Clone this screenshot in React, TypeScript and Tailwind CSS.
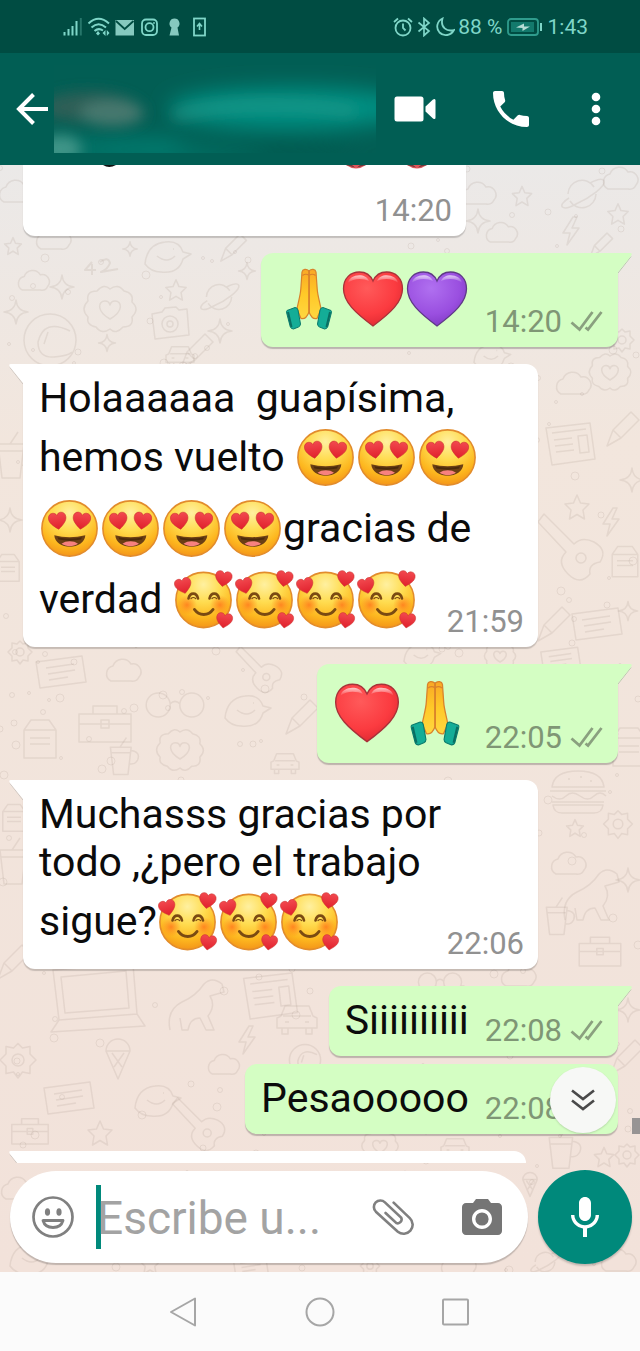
import React from "react";

const HEART =
  "M50 90C20 68 0 50 0 28C0 10 12 0 27 0C38 0 46 6 50 15C54 6 62 0 73 0C88 0 100 10 100 28C100 50 80 68 50 90Z";

/* ---------- emoji ---------- */

function EmojiDefs() {
  return (
    <svg className="absolute h-0 w-0" aria-hidden="true">
      <defs>
        <radialGradient id="face" cx="0.5" cy="0.22" r="0.8">
          <stop offset="0" stopColor="#fff0a0" />
          <stop offset="0.4" stopColor="#ffdc50" />
          <stop offset="0.75" stopColor="#fdb71f" />
          <stop offset="1" stopColor="#f39218" />
        </radialGradient>
        <radialGradient id="cheek">
          <stop offset="0" stopColor="#ff7a1c" stopOpacity="0.85" />
          <stop offset="1" stopColor="#ff8a1c" stopOpacity="0" />
        </radialGradient>
        <linearGradient id="smallHeart" x1="0" y1="0" x2="0" y2="1">
          <stop offset="0" stopColor="#f2494f" />
          <stop offset="1" stopColor="#e0202c" />
        </linearGradient>
        <radialGradient id="redHeart" cx="0.4" cy="0.3" r="0.8">
          <stop offset="0" stopColor="#ff5a5a" />
          <stop offset="0.6" stopColor="#fb3b40" />
          <stop offset="1" stopColor="#d9252e" />
        </radialGradient>
        <radialGradient id="purpleHeart" cx="0.4" cy="0.3" r="0.8">
          <stop offset="0" stopColor="#b070f0" />
          <stop offset="0.6" stopColor="#9a4fe0" />
          <stop offset="1" stopColor="#7a35bd" />
        </radialGradient>
        <linearGradient id="shine" x1="0" y1="0" x2="0" y2="1">
          <stop offset="0" stopColor="#ffffff" stopOpacity="0.7" />
          <stop offset="1" stopColor="#ffffff" stopOpacity="0" />
        </linearGradient>
        <linearGradient id="skin" x1="0" y1="0" x2="0" y2="1">
          <stop offset="0" stopColor="#f9a825" />
          <stop offset="0.5" stopColor="#ffc928" />
          <stop offset="1" stopColor="#ffd740" />
        </linearGradient>
      </defs>
    </svg>
  );
}

function HeartEyes() {
  return (
    <svg viewBox="0 0 61 61" className="size-[61px] shrink-0" role="img" aria-label="😍">
      <circle cx="30.5" cy="30.5" r="27.6" fill="url(#face)" stroke="#e28c2c" strokeWidth="1.6" />
      <g fill="url(#smallHeart)" stroke="#c9302c" strokeWidth="3">
        <path d={HEART} transform="translate(8.8 16) rotate(-8) scale(.175 .185)" />
        <path d={HEART} transform="translate(35 13.5) rotate(8) scale(.175 .185)" />
      </g>
      <path d="M15.300 37.300C25 39.800 36 39.800 46.300 37.300C46 44.500 38.500 48.800 30.800 48.800C23 48.800 15.600 44.500 15.300 37.300Z" fill="#6b3f14" />
      <path d="M18.500 39.200C26 41 36 41 43 39.200L42 41.600C35 43 27 43 19.500 41.600Z" fill="#4a2a0c" />
      <path d="M22.500 45.800C27 42.500 34.500 42.500 39 45.800C34 48.900 27.500 48.900 22.500 45.800Z" fill="#f7817f" />
    </svg>
  );
}

function SmilingHearts() {
  return (
    <svg viewBox="0 0 61 61" className="size-[61px] shrink-0" role="img" aria-label="🥰">
      <circle cx="30.500" cy="31" r="27.600" fill="url(#face)" stroke="#e28c2c" strokeWidth="1.600" />
      <circle cx="14" cy="36" r="10" fill="url(#cheek)" />
      <circle cx="47" cy="36" r="10" fill="url(#cheek)" />
      <g fill="none" stroke="#7a4a12" strokeWidth="2.600" strokeLinecap="round">
        <path d="M15.500 29.500C17 23 23.500 23 25 29.500" />
        <path d="M36.500 29.500C38 23 44.500 23 46 29.500" />
        <path d="M18 29.500q2.300-2 4.600 0M39 29.500q2.300-2 4.600 0" strokeWidth="1.200" />
        <path d="M21.500 40.500C26 47 35.500 47 40 40.500" strokeWidth="3" />
      </g>
      <g fill="url(#smallHeart)" stroke="#c9302c" strokeWidth="3">
        <path d={HEART} transform="translate(.5 11.500) rotate(-14) scale(.165 .17)" />
        <path d={HEART} transform="translate(43.500 1) rotate(9) scale(.165 .17)" />
        <path d={HEART} transform="translate(44.500 43) rotate(9) scale(.16 .165)" />
      </g>
    </svg>
  );
}

type Size = "md" | "lg";
const bigSize: Record<Size, string> = { md: "size-16 shrink-0", lg: "size-[68px] shrink-0" };

function Heart({ color, size }: { color: "red" | "purple"; size: Size }) {
  const red = color === "red";
  return (
    <svg viewBox="0 0 64 64" className={bigSize[size]} role="img" aria-label={red ? "❤️" : "💜"}>
      <path
        d={HEART}
        transform="translate(2.500 5) scale(.59 .6)"
        fill={red ? "url(#redHeart)" : "url(#purpleHeart)"}
        stroke={red ? "#a8323a" : "#5f3a86"}
        strokeWidth="2.200"
      />
      <path d="M7 16C8 7 25 5 28 14C22 11 12 11 7 16ZM36 14C39 5 56 7 57 16C52 11 42 11 36 14Z" fill="url(#shine)" />
    </svg>
  );
}

function Hands({ size }: { size: Size }) {
  return (
    <svg viewBox="0 0 64 64" className={bigSize[size]} role="img" aria-label="🙏">
      <g stroke="#d9822b" strokeWidth="1.200" strokeLinejoin="round">
        <path
          d="M32 4C34.500 1.500 38.500 2 39 5L40.200 22C40.500 28 43 36 44 42L40 51.500C36 52.500 33.500 49 32 45Z"
          fill="url(#skin)"
        />
        <path
          d="M32 4C29.500 1.500 25.500 2 25 5L23.800 22C23.500 28 21 36 20 42L24 51.500C28 52.500 30.500 49 32 45Z"
          fill="url(#skin)"
        />
        <path d="M32 4V46M25.500 8.500q3.500-2.500 6.500 0q3.500-2.500 6.500 0" fill="none" />
      </g>
      <path d="M10 43.500L18 40.500Q20.500 40.500 21 43L23.500 57Q23.500 59 21.500 60L16.500 62Q14 62 13.200 59.500L9.700 46Q9.200 44 10 43.500Z" fill="#14ad97" stroke="#0b7a6c" />
      <path d="M54 43.500L46 40.500Q43.500 40.500 43 43L40.500 57Q40.500 59 42.500 60L47.500 62Q50 62 50.800 59.500L54.300 46Q54.800 44 54 43.500Z" fill="#14ad97" stroke="#0b7a6c" />
      <path d="M11 45L14.500 60M53 45L49.500 60" stroke="#0a6e62" strokeWidth="2" fill="none" />
    </svg>
  );
}

/* ---------- wallpaper ---------- */

const doodles: Record<string, string> = {
  star: "M0-12L3.500-4L12-3L6 3L7.500 12L0 7.500L-7.500 12L-6 3L-12-3L-3.500-4Z",
  spark: "M0-12Q1-1 12 0Q1 1 0 12Q-1 1-12 0Q-1-1 0-12Z",
  cloud: "M-14 9A8 8 0 0 1-12-6A10 10 0 0 1 6-8A8 8 0 0 1 14 5Q12 10 6 9Z",
  planet: "M-14 0A14 14 0 0 1 12-7M14 0A14 14 0 0 1-12 7M-13 4C-26 12-20 18-6 10C8 4 24-8 22-13C20-17 12-13 8-11",
  camera: "M-18-10L-8-12L-5-16L6-17L9-14L17-15L19 11L-15 15ZM8 0A8 8 0 1 1-8 0A8 8 0 1 1 8 0M3 0A3 3 0 1 1-3 0A3 3 0 1 1 3 0",
  flower:
    "M-22-8Q-24-18-13-18Q-6-26 0-20Q8-26 14-18Q24-16 22-7Q30 0 22 8Q24 18 13 18Q6 26 0 20Q-8 26-14 18Q-24 16-22 8Q-30 0-22-8ZM0 10C-14 2-12-8-5-8Q-1-8 0-4Q1-8 5-8C12-8 14 2 0 10Z",
  helmet: "M26 0A26 26 0 1 1-26 0A26 26 0 1 1 26 0M20-9Q-6-22-12 2Q-12 18 4 17Q18 16 22 12M-6 4L-2-8",
  burger: "M-26-6Q-24-22 0-22Q24-22 26-6ZM-28-2H28M-26 3Q-18 9-12 3T2 3T16 3T28 3M-26 9H26M-25 12Q-24 20-16 20H16Q24 20 25 12ZM-10-14H-8M2-16H4M12-12H14",
  car: "M-20 6V-4L-16-6L-12-16H12L16-6L20-4V6ZM-15 6V12H-9V6M9 6V12H15V6M-14-6H14M-12 0H-8M8 0H12",
  paper: "M-24-16L20-21L25 15L-18 21ZM-18-11L16-15M-16-4L2-6M-15 2L3 0M-14 8L4 6M8-8L17-9L19 8L10 9Z",
  guitar: "M-34-26L-6 4Q-16 14-4 26Q8 38 18 26Q16 16 28 14Q36 2 22-6Q10-12 2-4L-28-34ZM14 10A5 5 0 1 1 4 10A5 5 0 1 1 14 10",
  pencil: "M-14 14L-8-2L10-20L18-12L0 6ZM-8-2L0 6",
  box: "M-16-12H16V16H-16ZM-16-12L-9-22H9L16-12M-10-4H10M-10 2H10",
  laptop: "M-42-30L38-36L42 14L-36 20ZM-34-23L31-29L34 8L-30 13ZM-36 20L-44 32L50 26L42 14",
  gear: "M0-11L3-8L8-9L8-4L12 0L8 4L8 9L3 8L0 12L-3 8L-8 9L-8 4L-12 0L-8-4L-8-9L-3-8ZM4 0A4 4 0 1 1-4 0A4 4 0 1 1 4 0",
  note: "M-24-10L22-16L26 10L-20 16ZM-14-4L14-8M-12 2L15-2M-11 8L8 5",
  bolt: "M2-14L-8 2H-1L-4 14L8-3H1L6-14Z",
  bird: "M-20 8Q-18-12 0-14Q14-16 18-4L26-2L18 3Q14 18-4 16Q-14 16-20 8ZM-8 0Q2 8 10 0M8-7H9",
  cup: "M-12-16H14L10 18H-8ZM-11-9H13M14-12Q26-10 22 0Q19 6 12 5M0-16L8-28",
  dino: "M-30 20Q-34 0-18-8Q-4-14 4-26Q12-34 22-26L24-18L10-14Q16-4 8 6L14 20H6L0 8Q-10 8-12 20H-18L-20 8",
  bag: "M-26-8H26V20H-26ZM-12-8V-16H12V-8M-26 2H26M-4-2H4V6H-4Z",
  glasses: "M-4 0A10 10 0 1 1-24 0A10 10 0 1 1-4 0M24 0A10 10 0 1 1 4 0A10 10 0 1 1 24 0M-4-1Q0-5 4-1",
  cone: "M-12-4L0 24L12-4ZM-12-4A12 12 0 1 1 12-4M-6-2L4 12M6-2L-4 12",
};

const placed: [string, number, number, number?][] = [
  ["star", 13, 246, 0.7], ["cloud", 18, 193], ["cloud", 35, 282, 0.9], ["spark", 62, 287], ["spark", 16, 312],
  ["flower", 110, 309], ["helmet", 50, 340], ["camera", 170, 324], ["planet", 219, 297, 0.9], ["star", 176, 290, 0.85],
  ["bird", 165, 256], ["spark", 130, 249, 0.6], ["pencil", 195, 354], ["spark", 220, 331], ["spark", 247, 271, 0.7],
  ["spark", 107, 343, 0.7], ["pencil", 232, 250, 0.8], ["cloud", 55, 240],
  ["cloud", 622, 180], ["planet", 582, 194], ["star", 522, 196, 0.8], ["cloud", 480, 195], ["star", 618, 214, 0.85],
  ["bolt", 571, 231], ["cloud", 503, 234, 0.9], ["spark", 478, 221], ["pencil", 600, 247, 0.7], ["gear", 622, 340],
  ["flower", 610, 372, 0.8], ["cloud", 575, 385], ["bird", 490, 356, 0.8], ["car", 180, 358, 0.7],
  ["paper", 570, 444], ["pencil", 621, 432], ["star", 577, 507], ["bolt", 611, 522], ["spark", 632, 480],
  ["guitar", 572, 548], ["box", 625, 564, 0.8], ["note", 596, 624], ["spark", 628, 611, 0.8], ["pencil", 552, 627],
  ["cup", 10, 460], ["spark", 10, 520], ["box", 8, 570, 0.7], ["gear", 20, 652],
  ["note", 60, 672], ["glasses", 175, 705, 1.2], ["bird", 245, 710], ["bag", 105, 722], ["box", 40, 742], ["flower", 180, 750, 0.9],
  ["cup", 120, 760, 0.8], ["guitar", 260, 670, 0.7], ["pencil", 300, 720], ["cloud", 125, 672], ["car", 285, 765, 0.7],
  ["bird", 420, 655, 0.8], ["flower", 500, 656, 0.6], ["note", 560, 660, 0.8], ["burger", 578, 793], ["box", 629, 750],
  ["gear", 618, 824, 1.2], ["star", 575, 828, 0.7], ["cloud", 570, 865], ["dino", 595, 900], ["spark", 628, 880],
  ["bag", 600, 950, 0.8], ["cup", 556, 920, 0.8], ["box", 14, 820, 0.7], ["cup", 12, 866], ["pencil", 12, 965],
  ["laptop", 95, 1000], ["dino", 200, 1010], ["gear", 18, 1060, 1.5], ["note", 68, 1098], ["cone", 118, 1055],
  ["paper", 270, 996, 1.1], ["car", 297, 1022], ["cloud", 225, 1066, 0.9], ["helmet", 305, 1060, 0.6], ["bird", 155, 1100],
  ["bolt", 247, 1040], ["guitar", 200, 1125, 0.8], ["bag", 30, 1130, 0.7], ["star", 100, 1133], ["flower", 380, 1146, 0.7],
  ["car", 455, 1150, 0.7], ["glasses", 440, 982, 0.9], ["cloud", 520, 977], ["cup", 560, 1152, 0.9], ["gear", 627, 1155],
  ["star", 604, 1157, 0.8], ["spark", 628, 1010], ["pencil", 625, 1060],
  ["cloud", 20, 1190], ["bird", 30, 1258], ["cone", 530, 1182, 0.6], ["cloud", 620, 1262], ["planet", 545, 1262, 0.7],
  ["star", 150, 1264, 0.8], ["note", 250, 1266, 0.7], ["gear", 370, 1266, 0.8], ["cloud", 460, 1266],
];

const dots = Array.from({ length: 340 }, (_, i) => ({
  x: (i * 149 + ((i * i) % 37) * 7) % 640,
  y: 168 + ((i * 263 + ((i * i) % 23) * 11) % 1104),
  r: [2.5, 4, 1.5, 3][i % 4],
}));

function Wallpaper() {
  return (
    <svg
      viewBox="0 165 640 1107"
      preserveAspectRatio="xMidYMin slice"
      className="absolute inset-0 h-full w-full"
      aria-hidden="true"
    >
      <g fill="none" stroke="#a08f84" strokeOpacity="0.17" strokeLinejoin="round">
        {dots.map((d, i) => (
          <circle key={i} cx={d.x} cy={d.y} r={d.r} />
        ))}
        {placed.map(([name, x, y, s = 1], i) => (
          <path key={i} d={doodles[name]} transform={`translate(${x} ${y}) scale(${s})`} strokeWidth={1.5 / s} />
        ))}
        <path d="M92 262L85 270H96M92 264V275M100 262Q108 256 110 263Q108 269 101 272L118 269" strokeWidth="2" />
      </g>
    </svg>
  );
}

/* ---------- messages ---------- */

function Ticks() {
  return (
    <svg viewBox="0 0 34 22" className="mb-2 ml-2 h-[22px] w-[34px] shrink-0" role="img" aria-label="Entregado">
      <path d="M1.500 12.500L9.500 19.500L22.500 2M15.500 17.500L18 19.500L31.500 2" fill="none" stroke="#8aa07f" strokeWidth="2.800" />
    </svg>
  );
}

function Time({ value, out }: { value: string; out?: boolean }) {
  return (
    <div className="ml-auto flex shrink-0 items-end pl-4">
      <time className={out ? "text-[31px] leading-9 text-[#7f9675]" : "text-[31px] leading-9 text-[#919191]"}>{value}</time>
      {out && <Ticks />}
    </div>
  );
}

function Incoming({ time, tail = true, children }: { time: string; tail?: boolean; children: React.ReactNode }) {
  return (
    <li
      className={
        tail
          ? "relative flex w-[515px] max-w-full shrink-0 items-end self-start rounded-xl rounded-tl-none bg-white pr-[14px] pb-[7px] pl-4 shadow-[0_2px_1px_rgba(0,0,0,0.18)]"
          : "relative flex w-[443px] max-w-full shrink-0 items-end self-start rounded-b-xl bg-white pr-[14px] pb-[7px] pl-4 shadow-[0_2px_1px_rgba(0,0,0,0.18)]"
      }
    >
      {tail && <LeftTail />}
      <div className="min-w-0 flex-1">{children}</div>
      <Time value={time} />
    </li>
  );
}

function LeftTail() {
  return (
    <svg viewBox="0 0 15 22" className="absolute top-0 -left-3.5 h-[22px] w-[15px]" aria-hidden="true">
      <path d="M1 3.500L14 20" stroke="#cfc7c1" />
      <path d="M15 0H2Q-1 0 1 3L14 19V22H15Z" fill="#fff" />
    </svg>
  );
}

function Outgoing({ time, tail = true, children }: { time: string; tail?: boolean; children: React.ReactNode }) {
  return (
    <li
      className={
        tail
          ? "relative flex shrink-0 items-end self-end rounded-xl rounded-tr-none bg-[#d4fec3] pr-[14px] pb-[7px] pl-4 shadow-[0_2px_1px_rgba(0,0,0,0.22)]"
          : "relative -mt-[9px] flex shrink-0 items-end self-end rounded-xl bg-[#d4fec3] pr-[14px] pb-[7px] pl-4 shadow-[0_2px_1px_rgba(0,0,0,0.22)]"
      }
    >
      {tail && (
        <svg viewBox="0 0 15 22" className="absolute top-0 -right-3.5 h-[22px] w-[15px]" aria-hidden="true">
          <path d="M14 3.500L1 20" stroke="#b9cbae" />
          <path d="M0 0H13Q16 0 14 3L1 19V22H0Z" fill="#d4fec3" />
        </svg>
      )}
      {children}
      <Time value={time} out />
    </li>
  );
}

function Line({ children }: { children: React.ReactNode }) {
  return <p className="leading-12 whitespace-pre">{children}</p>;
}

function EmojiLine({ children }: { children: React.ReactNode }) {
  return <p className="flex h-[71px] items-center whitespace-pre">{children}</p>;
}

const textBlock = "pt-2.5 pb-[5px] text-[41px] text-[#0b0b0b]";

function Messages() {
  return (
    <ul className="relative flex min-h-0 flex-1 flex-col gap-[17px] overflow-hidden pr-[22px] pl-[23px]">
      <Incoming time="14:20" tail={false}>
        <svg viewBox="0 0 400 64" className="h-16 w-[400px]" aria-hidden="true">
          <path d="M64 0H77Q70 4 64 0Z" fill="#111" />
          <path d="M307 0H327Q317 7 307 0ZM368 0H388Q378 7 368 0Z" fill="#e0555a" />
          <path d="M307 0H313L316 2.500ZM327 0H321L318 2.500ZM368 0H374L377 2.500ZM388 0H382L379 2.500Z" fill="#6b3a3a" />
        </svg>
      </Incoming>

      <Outgoing time="14:20">
        <div className="flex pt-3.5 pb-[9px]">
          <Hands size="md" />
          <Heart color="red" size="md" />
          <Heart color="purple" size="md" />
        </div>
      </Outgoing>

      <Incoming time="21:59">
        <div className={textBlock}>
          <Line>Holaaaaaa{"  "}guapísima,</Line>
          <EmojiLine>
            <span>hemos vuelto </span>
            <HeartEyes />
            <HeartEyes />
            <HeartEyes />
          </EmojiLine>
          <EmojiLine>
            <HeartEyes />
            <HeartEyes />
            <HeartEyes />
            <HeartEyes />
            <span>gracias de</span>
          </EmojiLine>
          <EmojiLine>
            <span>verdad </span>
            <SmilingHearts />
            <SmilingHearts />
            <SmilingHearts />
            <SmilingHearts />
          </EmojiLine>
        </div>
      </Incoming>

      <Outgoing time="22:05">
        <div className="flex pt-[15px] pb-[9px]">
          <Heart color="red" size="lg" />
          <Hands size="lg" />
        </div>
      </Outgoing>

      <Incoming time="22:06">
        <div className={textBlock}>
          <Line>Muchasss gracias por</Line>
          <Line>todo ,¿pero el trabajo</Line>
          <EmojiLine>
            <span>sigue?</span>
            <SmilingHearts />
            <SmilingHearts />
            <SmilingHearts />
          </EmojiLine>
        </div>
      </Incoming>

      <Outgoing time="22:08">
        <div className={textBlock}>
          <Line>Siiiiiiiiii</Line>
        </div>
      </Outgoing>

      <Outgoing time="22:08" tail={false}>
        <div className={textBlock}>
          <Line>Pesaooooo</Line>
        </div>
      </Outgoing>

      <li className="relative h-20 w-[503px] max-w-full shrink-0 self-start rounded-xl rounded-tl-none bg-white">
        <LeftTail />
      </li>
    </ul>
  );
}

/* ---------- bars ---------- */

function StatusBar() {
  return (
    <div className="flex h-[53px] shrink-0 items-center bg-[#004c42] pr-[52px] pl-[62px] text-[21px] text-[#7fd6c8]">
      <svg viewBox="0 0 145 20" className="h-5 w-[145px]" aria-hidden="true" fill="none" stroke="currentColor">
        <path d="M2.500 18.500V15M6.500 18.500V12M10.500 18.500V9M14.500 18.500V4" strokeWidth="2" />
        <path d="M18.800 18.500V1" strokeWidth="2" opacity="0.3" />
        <path d="M26.500 6.500Q36.500-3 47 6.500M29.500 10.500Q36.500 4 44 10.500M32.500 14Q36.500 10.500 41 13.500" strokeWidth="2" />
        <path d="M36 14L38 16.500L36 18.500L34 16.500ZM43.500 13V19L40.500 16ZM44.800 13V19L47.500 16Z" fill="currentColor" stroke="none" />
        <path d="M53.500 3H72V18.500H53.500Z" fill="#86c9bf" stroke="none" />
        <path d="M54 4L62.700 12L71.500 4" stroke="#004c42" strokeWidth="1.800" />
        <rect x="80" y="2.500" width="15" height="15.500" rx="4" strokeWidth="1.800" />
        <circle cx="87.500" cy="10.200" r="4" strokeWidth="1.800" />
        <circle cx="92" cy="6" r="0.900" fill="currentColor" stroke="none" />
        <path d="M112.500 1.500A5 5 0 0 1 115.500 10.500L117 18.500H107.500L109.500 10.500A5 5 0 0 1 112.500 1.500Z" fill="#86c9bf" stroke="none" />
        <rect x="132" y="1.500" width="11" height="17" strokeWidth="1.800" />
        <path d="M137.500 13V7M135 9.500L137.500 6.500L140 9.500" strokeWidth="1.600" />
      </svg>
      <svg viewBox="0 0 62 20" className="ml-auto h-5 w-[62px]" aria-hidden="true" fill="none" stroke="currentColor" strokeWidth="1.800">
        <circle cx="10" cy="11" r="7.500" />
        <path d="M10 6.500V11L12.500 13.500M1 5L5 1.500M19 5L15 1.500" />
        <path d="M25.500 5.500L36 14L31 18.500V1.500L36 6L25.500 14.500" strokeWidth="1.700" />
        <path d="M49.500 1.500C44 4 42.500 11 46.500 15.500C51 20 58 18.500 61 13C54 15 47 10.500 49.500 1.500Z" />
      </svg>
      <span className="ml-[3px] pt-0.5">88 %</span>
      <svg viewBox="0 0 36 20" className="ml-1 h-5 w-9" aria-hidden="true">
        <rect x="1" y="2" width="30" height="16" rx="3" fill="none" stroke="#2f9c8d" strokeWidth="1.800" />
        <rect x="4" y="5" width="23" height="10" fill="#13796c" />
        <path d="M9 10.500L17 6.500V9.500H23L15.500 14V11Z" fill="#b6ddd6" />
        <path d="M34 6V14" stroke="#7fd6c8" strokeWidth="2" />
      </svg>
      <span className="ml-[5px] pt-0.5">1:43</span>
    </div>
  );
}

function Header() {
  return (
    <header className="flex h-28 shrink-0 items-center bg-[#015e54] pr-[35px] pl-4 text-white">
      <button type="button" aria-label="Atrás" className="shrink-0">
        <svg viewBox="0 0 32 32" className="size-8" fill="none" stroke="currentColor" strokeWidth="4">
          <path d="M32 16H3M17.500 1.500L3 16L17.500 30.500" />
        </svg>
      </button>
      <svg viewBox="0 0 322 88" preserveAspectRatio="none" className="ml-1.5 h-[88px] min-w-0 flex-1" aria-hidden="true">
        <defs>
          <filter id="soft" filterUnits="userSpaceOnUse" x="-60" y="-60" width="440" height="210">
            <feGaussianBlur stdDeviation="11" />
          </filter>
          <filter id="softer" filterUnits="userSpaceOnUse" x="-60" y="-60" width="440" height="210">
            <feGaussianBlur stdDeviation="7" />
          </filter>
        </defs>
        <rect width="322" height="88" fill="#025e54" />
        <g filter="url(#soft)">
          <ellipse cx="240" cy="43" rx="125" ry="20" fill="#069284" />
          <ellipse cx="110" cy="84" rx="110" ry="10" fill="#068073" />
          <ellipse cx="210" cy="78" rx="90" ry="9" fill="#025a50" />
        </g>
        <g filter="url(#softer)">
          <ellipse cx="34" cy="42" rx="48" ry="15" fill="#2e5e57" />
          <ellipse cx="58" cy="48" rx="32" ry="13" fill="#47786e" />
          <path d="M120 50Q200 32 300 46" fill="none" stroke="#2f9a8b" strokeWidth="6" />
          <ellipse cx="6" cy="84" rx="22" ry="14" fill="#3f9588" />
        </g>
      </svg>
      <button type="button" aria-label="Videollamada" className="ml-[18px] shrink-0">
        <svg viewBox="0 0 42 26" className="h-[26px] w-[42px]" fill="currentColor">
          <rect x="0.500" y="0.500" width="29" height="25" rx="2.500" />
          <path d="M31.500 10.500L39 3.500Q41.500 2 41.500 4.500V21.500Q41.500 24 39 22.500L31.500 15.500Z" />
        </svg>
      </button>
      <button type="button" aria-label="Llamar" className="ml-[57px] shrink-0">
        <svg viewBox="3 3 18 18" className="size-9" fill="currentColor">
          <path d="M6.620 10.790c1.440 2.830 3.760 5.140 6.590 6.590l2.200-2.200c.27-.27.67-.36 1.020-.24 1.120.37 2.330.57 3.570.57.55 0 1 .45 1 1V20c0 .55-.45 1-1 1-9.390 0-17-7.610-17-17 0-.55.45-1 1-1h3.500c.55 0 1 .45 1 1 0 1.250.2 2.450.57 3.570.11.35.03.74-.25 1.020l-2.200 2.200z" />
        </svg>
      </button>
      <button type="button" aria-label="Más opciones" className="ml-[58px] shrink-0">
        <svg viewBox="0 0 18 34" className="h-[34px] w-[18px]" fill="currentColor">
          <circle cx="9" cy="5" r="4.300" />
          <circle cx="9" cy="17" r="4.300" />
          <circle cx="9" cy="29" r="4.300" />
        </svg>
      </button>
    </header>
  );
}

function Composer() {
  return (
    <form className="relative flex shrink-0 items-center gap-2.5 pt-[7px] pr-2 pb-2 pl-2.5">
      <div className="flex h-[92px] min-w-0 flex-1 items-center rounded-full bg-white pr-[22px] pl-[22px] text-[#808080] shadow-[0_2px_1px_rgba(0,0,0,0.2)]">
        <button type="button" aria-label="Emojis" className="shrink-0">
          <svg viewBox="0 0 42 42" className="size-[42px]" fill="none" stroke="currentColor">
            <circle cx="21" cy="21" r="19.500" strokeWidth="2.700" />
            <ellipse cx="15.500" cy="16" rx="2.600" ry="3.800" fill="currentColor" stroke="none" />
            <ellipse cx="27" cy="16" rx="2.600" ry="3.800" fill="currentColor" stroke="none" />
            <path d="M11 24.500H31Q29 31.500 21 31.500Q13 31.500 11 24.500Z" strokeWidth="2.800" strokeLinejoin="round" />
          </svg>
        </button>
        <div className="ml-[22px] h-16 w-[5px] shrink-0 bg-[#00897b]" />
        <input
          type="text"
          aria-label="Mensaje"
          placeholder="Escribe u..."
          className="-ml-1 h-16 min-w-0 flex-1 bg-transparent pt-0.5 text-[46px] text-[#111] outline-none placeholder:text-[#a3a3a3]"
        />
        <button type="button" aria-label="Adjuntar" className="ml-2 shrink-0">
          <svg viewBox="0 0 130 120" className="h-[39px] w-[42px]" fill="none" stroke="currentColor" strokeWidth="8" strokeLinecap="round">
            <path d="M67 14L117 62A28 28 0 0 1 80 104L12 42A20 20 0 0 1 40 13L90 60A12 12 0 0 1 75 77L42 46" />
          </svg>
        </button>
        <button type="button" aria-label="Cámara" className="ml-11 shrink-0">
          <svg viewBox="0 0 24 24" className="size-12" fill="#757575">
            <path
              fillRule="evenodd"
              d="M9 3L7.500 5H4c-1.100 0-2 .9-2 2v12c0 1.100.9 2 2 2h16c1.100 0 2-.9 2-2V7c0-1.100-.9-2-2-2h-3.500L15 3H9zm3 15c-2.760 0-5-2.240-5-5s2.240-5 5-5 5 2.240 5 5-2.240 5-5 5z"
            />
            <circle cx="12" cy="13" r="3.300" />
          </svg>
        </button>
      </div>
      <button
        type="button"
        aria-label="Mensaje de voz"
        className="flex size-[94px] shrink-0 items-center justify-center rounded-full bg-[#00897b] shadow-[0_2px_2px_rgba(0,0,0,0.2)]"
      >
        <svg viewBox="0 0 24 24" className="size-12" fill="#fff">
          <path d="M12 14c1.660 0 2.990-1.340 2.990-3L15 5c0-1.660-1.340-3-3-3S9 3.340 9 5v6c0 1.660 1.340 3 3 3zm5.300-3c0 3-2.540 5.100-5.300 5.100S6.700 14 6.700 11H5c0 3.410 2.720 6.230 6 6.720V22h2v-4.280c3.280-.48 6-3.300 6-6.720h-1.700z" />
        </svg>
      </button>
    </form>
  );
}

function NavBar() {
  return (
    <nav className="flex h-[79px] shrink-0 items-center justify-center gap-[106px] bg-[#fbfbfb] text-[#a6a6a6]">
      <button type="button" aria-label="Volver">
        <svg viewBox="0 0 30 30" className="size-[30px]" fill="none" stroke="currentColor" strokeWidth="2" strokeLinejoin="round">
          <path d="M26 1.500V28.500L2 15Z" />
        </svg>
      </button>
      <button type="button" aria-label="Inicio">
        <svg viewBox="0 0 30 30" className="size-[30px]" fill="none" stroke="currentColor" strokeWidth="2">
          <circle cx="15" cy="15" r="13.500" />
        </svg>
      </button>
      <button type="button" aria-label="Recientes">
        <svg viewBox="0 0 30 30" className="size-[30px]" fill="none" stroke="currentColor" strokeWidth="2" strokeLinejoin="round">
          <rect x="2" y="2.500" width="25" height="25" rx="1" />
        </svg>
      </button>
    </nav>
  );
}

export default function App() {
  return (
    <div className="flex h-screen flex-col overflow-hidden font-['Roboto',sans-serif]">
      <EmojiDefs />
      <StatusBar />
      <Header />
      <main className="relative flex min-h-0 flex-1 flex-col bg-linear-to-b from-[#ebe9e8] from-0% via-[#f2e6dd] via-25% to-[#f2e2da]">
        <Wallpaper />
        <Messages />
        <Composer />
        <button
          type="button"
          aria-label="Ir al final"
          className="absolute right-6 bottom-[139px] flex size-[66px] items-center justify-center rounded-full bg-[#f7f8f6] shadow-[0_1px_2px_rgba(0,0,0,0.15)]"
        >
          <svg viewBox="0 0 26 26" className="size-[26px]" fill="none" stroke="#4a4a4a" strokeWidth="2.600">
            <path d="M2 3.500L13 12L24 3.500M2 13.500L13 22L24 13.500" />
          </svg>
        </button>
        <div className="absolute right-0 bottom-[138px] h-4 w-2 bg-[#979494]" />
      </main>
      <NavBar />
    </div>
  );
}
